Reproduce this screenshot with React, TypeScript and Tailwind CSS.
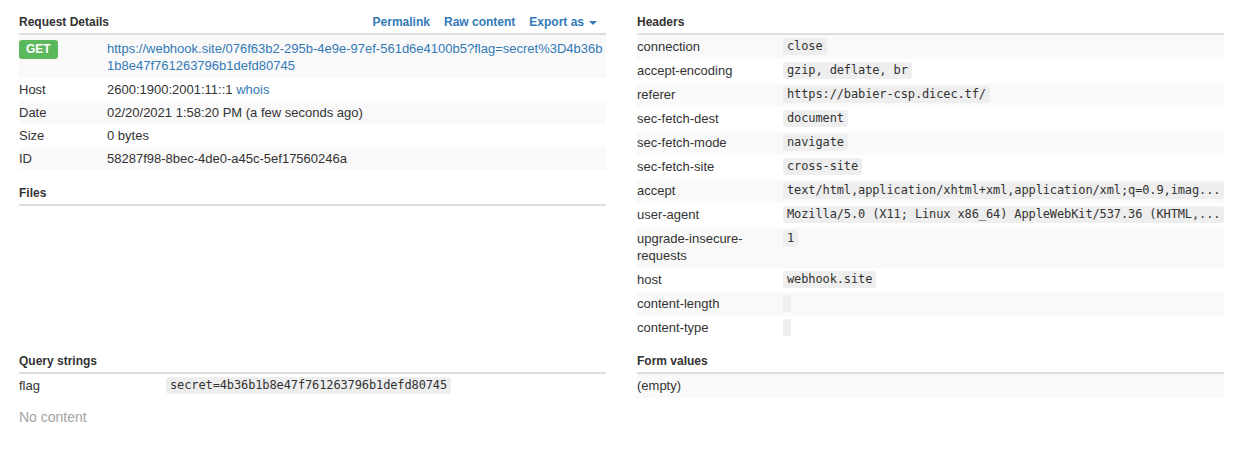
import React from "react";

const headers: [string, string][] = [
  ["connection", "close"],
  ["accept-encoding", "gzip, deflate, br"],
  ["referer", "https://babier-csp.dicec.tf/"],
  ["sec-fetch-dest", "document"],
  ["sec-fetch-mode", "navigate"],
  ["sec-fetch-site", "cross-site"],
  ["accept", "text/html,application/xhtml+xml,application/xml;q=0.9,imag..."],
  ["user-agent", "Mozilla/5.0 (X11; Linux x86_64) AppleWebKit/537.36 (KHTML,..."],
  ["upgrade-insecure-requests", "1"],
  ["host", "webhook.site"],
  ["content-length", ""],
  ["content-type", ""],
];

function SectionHeader({ title, children }: { title: string; children?: React.ReactNode }) {
  return (
    <div className="flex items-end justify-between border-b-2 border-[#dddddd] pt-[7px] pb-[2px]">
      <span className="text-[12px] font-bold text-[#333]">{title}</span>
      {children}
    </div>
  );
}

function Code({ children }: { children: string }) {
  return (
    <code className="inline-block h-[17px] max-w-full overflow-hidden whitespace-nowrap rounded-[3px] bg-[#eeeeee] px-1 align-top font-['DejaVu_Sans_Mono',monospace] text-[12px] leading-[17px] tracking-[-0.12px] text-[#333]">
      {children}
    </code>
  );
}

export default function App() {
  return (
    <div className="min-h-screen bg-white pl-[19px] pr-[16px] pt-[7px] font-['Liberation_Sans',Arial,sans-serif] text-[13px] leading-[17px] text-[#333]">
      <div className="grid grid-cols-2 gap-x-[31px]">
        {/* Left column */}
        <div>
          <SectionHeader title="Request Details">
            <div className="flex items-center gap-[14px] pr-[9px] text-[12px] font-bold text-[#337ab7]">
              <a>Permalink</a>
              <a>Raw content</a>
              <a className="flex items-center">
                Export as
                <span className="ml-[5px] inline-block h-0 w-0 border-x-[4px] border-t-[4px] border-x-transparent border-t-current" />
              </a>
            </div>
          </SectionHeader>

          <div className="grid grid-cols-[88px_1fr] bg-[#f9f9f9] pt-[5px] pb-[4px]">
            <div>
              <span className="-mt-px inline-block rounded-[3px] bg-[#5cb85c] px-[7px] text-[12px] font-bold leading-[19px] text-white">
                GET
              </span>
            </div>
            <div className="text-[#337ab7]">
              <div className="whitespace-nowrap">https://webhook.site/076f63b2-295b-4e9e-97ef-561d6e4100b5?flag=secret%3D4b36b</div>
              <div>1b8e47f761263796b1defd80745</div>
            </div>
          </div>
          <div className="grid grid-cols-[88px_1fr] py-[3px]">
            <div>Host</div>
            <div>
              2600:1900:2001:11::1 <a className="text-[#337ab7]">whois</a>
            </div>
          </div>
          <div className="grid grid-cols-[88px_1fr] bg-[#f9f9f9] py-[3px]">
            <div>Date</div>
            <div>02/20/2021 1:58:20 PM (a few seconds ago)</div>
          </div>
          <div className="grid grid-cols-[88px_1fr] py-[3px]">
            <div>Size</div>
            <div>0 bytes</div>
          </div>
          <div className="grid grid-cols-[88px_1fr] bg-[#f9f9f9] py-[3px]">
            <div>ID</div>
            <div>58287f98-8bec-4de0-a45c-5ef17560246a</div>
          </div>

          <div className="mt-2">
            <SectionHeader title="Files" />
          </div>
        </div>

        {/* Right column */}
        <div>
          <SectionHeader title="Headers" />
          {headers.map(([k, v], i) => (
            <div
              key={k}
              className={`grid grid-cols-[146px_1fr] pt-[3px] pb-[4px] ${i % 2 === 0 ? "bg-[#f9f9f9]" : ""}`}
            >
              <div className="pr-2">{k}</div>
              <div className="min-w-0">
                <Code>{v}</Code>
              </div>
            </div>
          ))}
        </div>
      </div>

      <div className="mt-[6px] grid grid-cols-2 gap-x-[31px]">
        <div>
          <SectionHeader title="Query strings" />
          <div className="grid grid-cols-[147px_1fr] py-[3px]">
            <div>flag</div>
            <div>
              <Code>secret=4b36b1b8e47f761263796b1defd80745</Code>
            </div>
          </div>
          <p className="mt-[12px] text-[14px] leading-[17px] text-[#a3a3a3]">No content</p>
        </div>
        <div>
          <SectionHeader title="Form values" />
          <div className="bg-[#f9f9f9] pt-[3px] pb-[4px]">(empty)</div>
        </div>
      </div>
    </div>
  );
}
